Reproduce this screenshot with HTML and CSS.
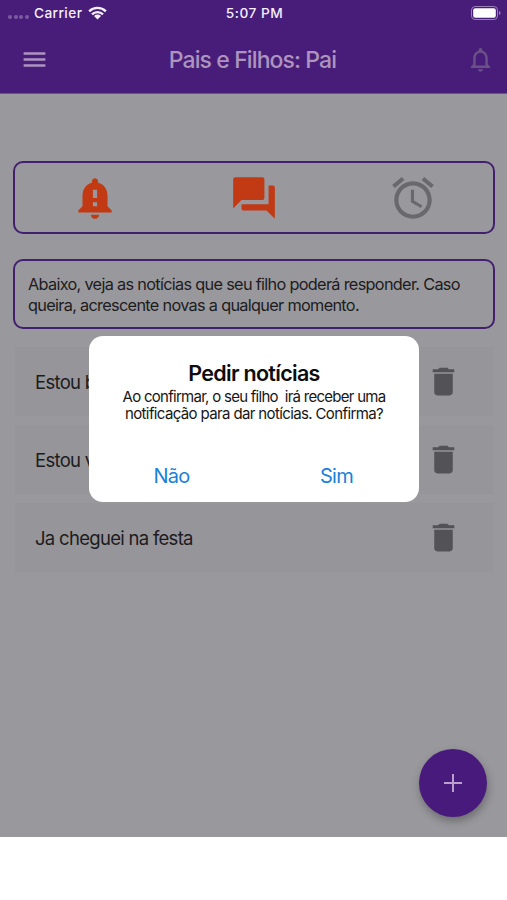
FILE: index.html
```html
<!DOCTYPE html>
<html lang="pt-BR">
<head>
<meta charset="utf-8">
<title>Pais e Filhos</title>
<link rel="stylesheet" href="styles.css">
</head>
<body>
<svg width="0" height="0" class="defs">
  <symbol id="trash" viewBox="0 0 24 24"><path d="M6 19c0 1.1.9 2 2 2h8c1.1 0 2-.9 2-2V7H6v12zM19 4h-3.5l-1-1h-5l-1 1H5v2h14V4z"/></symbol>
</svg>
<div class="screen">
  <header class="header">
    <div class="status">
      <div class="carrier">
        <span class="signal"><i></i><i></i><i></i><i></i></span>
        <span class="carrier-name">Carrier</span>
        <svg class="wifi" viewBox="0 0 20 14"><path d="M1.2 5.2a12.6 12.6 0 0 1 17.6 0M4.2 8.4a8.3 8.3 0 0 1 11.6 0" fill="none" stroke="#f5effa" stroke-width="2.5"/><path d="M6.3 10.1a5.4 5.4 0 0 1 7.4 0L10 13.8z" fill="#f5effa"/></svg>
      </div>
      <span class="time">5:07 PM</span>
      <div class="battery">
        <svg viewBox="0 0 30 14"><rect x=".5" y=".5" width="26" height="13" rx="3.6" fill="none" stroke="#9b80b8"/><rect x="2.2" y="2.2" width="22.6" height="9.6" rx="2" fill="#fff"/><path d="M28 5v4q1.6-.6 1.6-2T28 5z" fill="#9b80b8"/></svg>
      </div>
    </div>
    <div class="bar">
      <svg class="menu" viewBox="0 0 24 24"><path d="M3 18h18v-2H3v2zm0-5h18v-2H3v2zm0-7v2h18V6H3z"/></svg>
      <h1 class="title">Pais e Filhos: Pai</h1>
      <svg class="bell" viewBox="0 0 24 24"><path d="M12 22c1.1 0 2-.9 2-2h-4c0 1.1.9 2 2 2zm6-6v-5c0-3.07-1.63-5.64-4.5-6.32V4c0-.83-.67-1.5-1.5-1.5s-1.5.67-1.5 1.5v.68C7.64 5.36 6 7.92 6 11v5l-2 2v1h16v-1l-2-2zm-2 1H8v-6c0-2.48 1.51-4.5 4-4.5s4 2.02 4 4.5v6z"/></svg>
    </div>
  </header>
  <main class="content">
    <nav class="tabs">
      <svg class="tab" viewBox="0 0 24 24"><path d="M18 16v-5c0-3.07-1.64-5.64-4.5-6.32V4c0-.83-.67-1.5-1.5-1.5s-1.5.67-1.5 1.5v.68C7.63 5.36 6 7.92 6 11v5l-2 2v1h16v-1l-2-2zm-5 0h-2v-2h2v2zm0-4h-2V8h2v4zm-1 10c1.1 0 2-.9 2-2h-4c0 1.1.89 2 2 2z"/></svg>
      <svg class="tab" viewBox="0 0 24 24"><path d="M21 6h-2v9H6v2c0 .55.45 1 1 1h11l4 4V7c0-.55-.45-1-1-1zm-4 6V3c0-.55-.45-1-1-1H3c-.55 0-1 .45-1 1v14l4-4h10c.55 0 1-.45 1-1z"/></svg>
      <svg class="tab off" viewBox="0 0 24 24"><path d="M22 5.72l-4.6-3.86-1.29 1.53 4.6 3.86L22 5.72zM7.88 3.39L6.6 1.86 2 5.71l1.29 1.53 4.59-3.85zM12.5 8H11v6l4.75 2.85.75-1.23-4-2.37V8zM12 4c-4.97 0-9 4.03-9 9s4.02 9 9 9c4.97 0 9-4.03 9-9s-4.03-9-9-9zm0 16c-3.87 0-7-3.13-7-7s3.13-7 7-7 7 3.13 7 7-3.13 7-7 7z"/></svg>
    </nav>
    <p class="info">Abaixo, veja as notícias que seu filho poderá responder. Caso<br>queira, acrescente novas a qualquer momento.</p>
    <ul class="list">
      <li class="row"><span>Estou b</span><svg class="trash"><use href="#trash"/></svg></li>
      <li class="row"><span>Estou v</span><svg class="trash"><use href="#trash"/></svg></li>
      <li class="row"><span>Ja cheguei na festa</span><svg class="trash"><use href="#trash"/></svg></li>
    </ul>
  </main>
  <button class="fab"><svg viewBox="0 0 18 18"><path d="M9 0v18M0 9h18" stroke="#b9a0cd" stroke-width="2"/></svg></button>
  <section class="dialog">
    <h2 class="dialog-title">Pedir notícias</h2>
    <p class="dialog-text"><span class="msg-a">Ao confirmar, o seu filho&nbsp; irá receber uma</span><br><span class="msg-b">notificação para dar notícias. Confirma?</span></p>
    <div class="actions"><button>Não</button><button>Sim</button></div>
  </section>
</div>
</body>
</html>
```

FILE: styles.css
```css
* { box-sizing: border-box; }
body { margin: 0; background: #fff; font-family: Inter, "Liberation Sans", sans-serif; }
h1, h2, p, ul { margin: 0; padding: 0; font-weight: 400; }
button { border: 0; padding: 0; background: none; font: inherit; letter-spacing: inherit; }
svg { display: block; }
.defs { position: absolute; }
.screen { position: relative; width: 507px; height: 837px; background: #99989d; }
.header { height: 94px; background: #481d79; border-bottom: 1px solid #6a5485; }
.status { height: 26px; display: grid; grid-template-columns: 1fr auto 1fr; align-items: center; padding: 0 6px 0 8px; color: #f5effa; font-size: 13.7px; font-weight: 500; }
.carrier { display: flex; align-items: center; }
.signal { display: flex; gap: 1.6px; width: 26px; padding-top: 8px; }
.signal i { width: 4px; height: 4px; border-radius: 50%; background: #7c5aa0; }
.carrier-name { letter-spacing: .4px; }
.wifi { width: 19px; height: 14px; margin-left: 6px; }
.time { letter-spacing: .5px; white-space: nowrap; }
.battery { justify-self: end; }
.battery svg { width: 30px; height: 14px; }
.bar { height: 67px; display: flex; justify-content: space-between; align-items: center; padding: 0 12px 0 20px; }
.menu { width: 29px; height: 29px; fill: #ac94bf; }
.title { margin-right: 10px; font-size: 23px; font-weight: 500; letter-spacing: -.9px; color: #ac94bf; white-space: nowrap; }
.bell { width: 29px; height: 29px; fill: #6b5285; }
.content { padding: 67px 12px 0 13px; }
.tabs { height: 73px; border: 2px solid #43206f; border-radius: 10px; display: grid; grid-template-columns: repeat(3, 1fr); justify-items: center; align-items: center; }
.tab { width: 50px; height: 50px; fill: #c13a14; }
.tab.off { fill: #69686c; }
.info { height: 70px; margin-top: 25px; border: 2px solid #43206f; border-radius: 10px; padding: 13px 0 0 13px; font-size: 16.3px; line-height: 21px; letter-spacing: -.69px; color: #1d1c20; white-space: nowrap; }
.list { list-style: none; margin: 18px 2px 0; display: flex; flex-direction: column; gap: 9px; }
.row { height: 69px; display: flex; align-items: center; justify-content: space-between; padding: 0 31px 0 20px; background: #969599; font-size: 18.5px; letter-spacing: -.7px; color: #1d1c20; }
.trash { width: 37px; height: 37px; fill: #535256; }
.fab { position: absolute; left: 419px; top: 749px; width: 68px; height: 68px; border-radius: 50%; background: #481a7c; display: grid; place-items: center; box-shadow: 1px 4px 8px rgba(0,0,0,.3); }
.fab svg { width: 18px; height: 18px; }
.dialog { position: absolute; left: 89px; top: 336px; width: 330px; height: 166px; border-radius: 14px; background: #fff; padding-top: 23px; text-align: center; color: #161616; white-space: nowrap; }
.dialog-title { font-size: 21.5px; line-height: 28px; font-weight: 600; letter-spacing: -.7px; color: #0d0d0d; }
.dialog-text { margin-top: 1px; font-size: 15px; line-height: 17px; }
.msg-a { letter-spacing: -.73px; }
.msg-b { letter-spacing: -.63px; }
.actions { display: grid; grid-template-columns: 1fr 1fr; margin-top: 40px; font-size: 20px; line-height: 28px; letter-spacing: -.7px; }
.actions button { color: #1b7fdc; }
```
